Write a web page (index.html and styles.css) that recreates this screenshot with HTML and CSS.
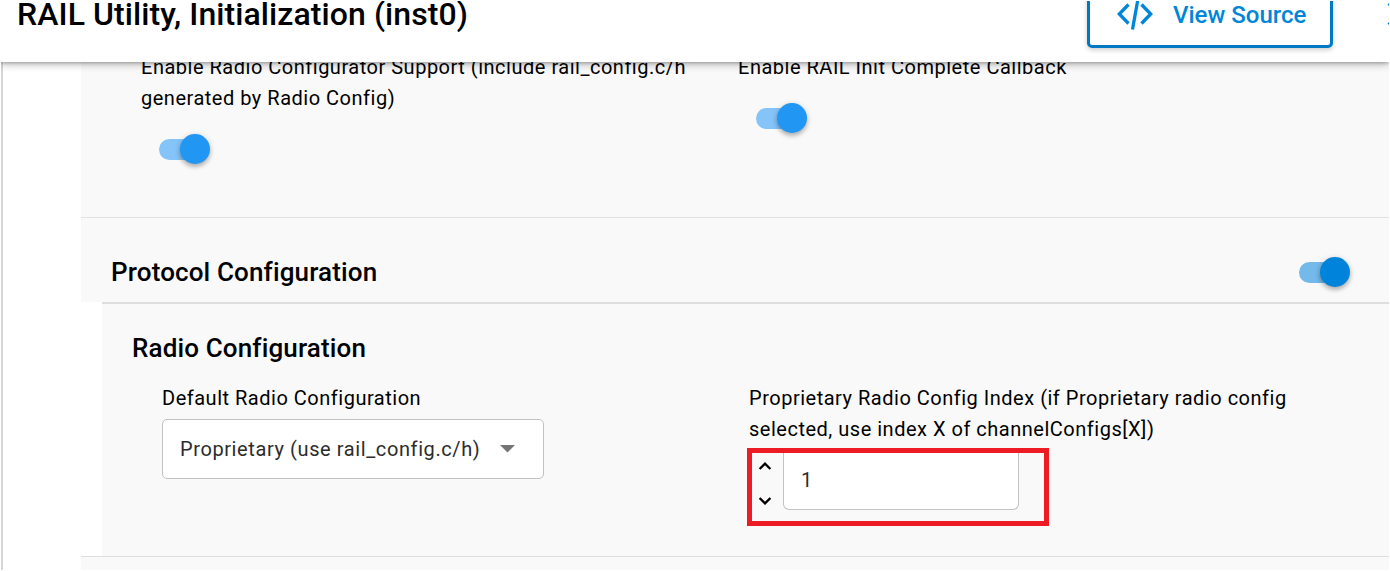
FILE: index.html
```html
<!DOCTYPE html>
<html lang="en">
<head>
<meta charset="utf-8">
<title>RAIL Utility, Initialization</title>
<link rel="stylesheet" href="styles.css">
</head>
<body>
<div class="page">
  <header class="topbar">
    <h1 class="title">RAIL Utility, Initialization (inst0)</h1>
    <button class="source-btn">
      <svg class="code-icon" viewBox="0 0 36 30" width="36" height="30"><path d="M11.500 4.500 2.300 14l9.200 9.500M24.500 4.500 33.700 14l-9.200 9.500M20.800 0 15.500 29.500" fill="none" stroke="#0086d9" stroke-width="3.300"/></svg>
      <span>View Source</span>
    </button>
    <svg class="close-icon" viewBox="0 0 24 24" width="24" height="24"><path d="M1.500 1.500 22.500 22.500M22.500 1.500 1.500 22.500" stroke="#0086d9" stroke-width="3"/></svg>
  </header>
  <main class="panel">
    <section class="options">
      <div class="field">
        <div class="label">Enable Radio Configurator Support (include rail_config.c/h<br>generated by Radio Config)</div>
        <div class="toggle"><span class="thumb"></span></div>
      </div>
      <div class="field">
        <div class="label">Enable RAIL Init Complete Callback</div>
        <div class="toggle"><span class="thumb"></span></div>
      </div>
    </section>
    <section class="protocol">
      <h2 class="heading">Protocol Configuration</h2>
      <div class="toggle primary"><span class="thumb"></span></div>
    </section>
    <section class="radio">
      <h2 class="heading">Radio Configuration</h2>
      <div class="radio-fields">
        <div class="field">
          <div class="label">Default Radio Configuration</div>
          <div class="select"><span>Proprietary (use rail_config.c/h)</span><svg class="caret" viewBox="0 0 15 8" width="15" height="8"><path d="M0 0h15L7.500 7.500z" fill="#757575"/></svg></div>
        </div>
        <div class="field">
          <div class="label">Proprietary Radio Config Index (if Proprietary radio config<br>selected, use index X of channelConfigs[X])</div>
          <div class="highlight">
            <div class="stepper">
              <svg viewBox="0 0 12 8" width="12" height="8"><path d="M.6 7 6 1.700 11.400 7" fill="none" stroke="#000" stroke-width="2.400"/></svg>
              <svg viewBox="0 0 12 8" width="12" height="8"><path d="M.6 1 6 6.300 11.400 1" fill="none" stroke="#000" stroke-width="2.400"/></svg>
            </div>
            <div class="number">1</div>
          </div>
        </div>
      </div>
    </section>
    <section class="next"></section>
  </main>
</div>
</body>
</html>
```
FILE: styles.css
```css
* { box-sizing: border-box; }
body { margin: 0; background: #fff; font-family: Roboto, sans-serif; color: #000; overflow: hidden; }
.page { width: 1389px; height: 570px; overflow: hidden; display: flex; flex-direction: column; }
.topbar { position: relative; z-index: 1; flex: none; height: 62px; background: #fff; display: flex; align-items: flex-start; padding-left: 17px; box-shadow: 0 2px 8px rgba(0,0,0,.3), 0 1px 3px rgba(0,0,0,.2); clip-path: inset(1px 0 -20px 1px); }
.title { margin: 0 auto 0 0; font-size: 32px; line-height: 28px; font-weight: 500; letter-spacing: .08px; white-space: nowrap; }
.source-btn { display: flex; align-items: center; gap: 20px; flex: none; width: 246px; height: 66px; margin: -18px 54px 0 0; padding: 0 0 0 27px; border: 3px solid #0079c4; border-radius: 5px; background: #fff; color: #0086d9; font: 500 24px/30px Roboto, sans-serif; white-space: nowrap; box-shadow: 0 2px 5px rgba(0,0,0,.2); }
.code-icon { flex: none; }
.source-btn span { padding-bottom: 1px; }
.close-icon { flex: none; margin: 2px -22px 0 0; }
.panel { flex: none; height: 508px; margin-left: 1px; padding-left: 78px; border-left: 2px solid #d6d6d6; }
.label { font-size: 20px; line-height: 31px; letter-spacing: .51px; white-space: nowrap; }
.options { height: 156px; background: #f9f9f9; border-bottom: 1px solid #e2e2e2; display: grid; grid-template-columns: 597px 1fr; padding-left: 60px; }
.options .label { margin-top: -10px; }
.options .toggle { margin: 25px 0 0 18px; }
.toggle { width: 42px; height: 21px; display: flex; align-items: center; justify-content: flex-end; background: #85c4f8; border-radius: 10.5px; flex: none; color: #2196f3; }
.toggle.primary { color: #0083da; background: #73b9e9; margin: 0 9px 0 0; }
.thumb { flex: none; width: 30px; height: 30px; margin: 0 -9px 1px 0; border-radius: 50%; background: currentColor; box-shadow: 0 3px 4px rgba(0,0,0,.22), 0 1px 6px rgba(0,0,0,.15); }
.protocol { height: 84px; background: #f9f9f9; display: flex; align-items: center; justify-content: space-between; padding: 25px 39px 0 30px; }
.protocol .heading { margin-top: -1px; }
.heading { margin: 0; font-size: 26px; line-height: 32px; font-weight: 500; letter-spacing: .14px; white-space: nowrap; }
.radio { height: 254px; margin-left: 21px; background: #f9f9f9; border-top: 2px solid #dedede; padding: 28px 0 0 30px; }
.radio-fields { display: grid; grid-template-columns: 587px 1fr; padding: 19px 0 0 30px; }
.select { width: 382px; height: 60px; margin-top: 5px; border: 1px solid #c2c2c2; border-radius: 5px; background: #fff; display: flex; align-items: center; gap: 20px; padding-left: 17px; font-size: 20px; letter-spacing: .6px; color: #2c2c2c; white-space: nowrap; }
.caret { flex: none; }
.highlight { display: flex; width: 302px; height: 78px; margin: 3px 0 0 -2px; border: 5px solid #ed1c24; padding-left: 7px; }
.stepper { width: 24px; display: flex; flex-direction: column; padding-top: 9px; gap: 27px; }
.number { width: 236px; height: 57px; border: 1px solid #c2c2c2; border-top: 0; border-radius: 0 0 6px 6px; background: #fff; padding: 12px 17px 0; font-size: 20px; line-height: 31px; color: #2c2c2c; }
.next { height: 14px; background: #f9f9f9; border-top: 1px solid #dedede; }
```
